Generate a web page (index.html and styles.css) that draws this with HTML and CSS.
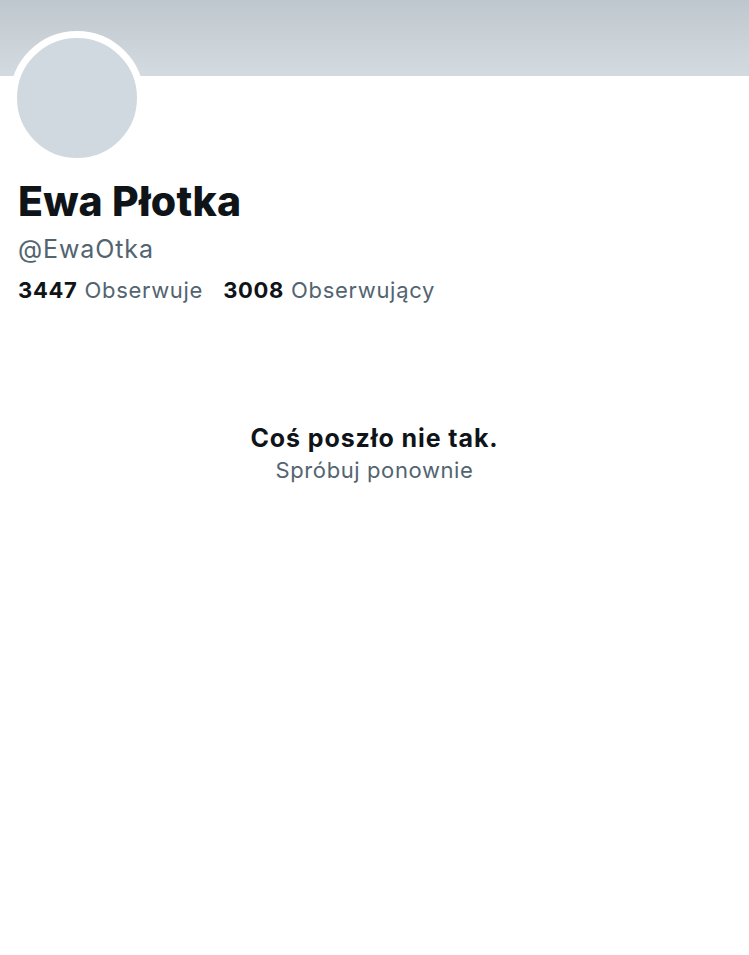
FILE: index.html
```html
<!DOCTYPE html>
<html lang="pl">
<head>
    <meta charset="UTF-8">
    <meta name="viewport" content="width=device-width, initial-scale=1.0">
    <title>Ewa Płotka (@EwaOtka)</title>
<link rel="stylesheet" href="styles.css">
</head>
<body>
<div class="profile">
    <div class="banner"></div>
    <div class="header">
        <div class="avatar"></div>
        <h1 class="name">Ewa Płotka</h1>
        <div class="handle">@EwaOtka</div>
        <div class="stats">
            <span class="stat"><b>3447</b> Obserwuje</span>
            <span class="stat"><b>3008</b> Obserwujący</span>
        </div>
    </div>
    <!-- error state -->
    <div class="error">
        <div class="error-title">Coś poszło nie tak.</div>
        <div class="error-retry">Spróbuj ponownie</div>
    </div>
</div>
</body>
</html>
```

FILE: styles.css
```css
:root{
  --clr-text: #0f1419;
  --clr-muted: #536471;
}

body {
  margin: 0;
  background-color: #fff;
  color: var(--clr-text);
  font-family: Inter, "Noto Sans", sans-serif;
}

.banner {
  height: 76px;
  background: linear-gradient(#bfc7ce, #d4dbe0);
}

.header {
  padding: 0 18px;
}

.avatar {
  width: 120px;
  height: 120px;
  margin: -45px 0 0 -8px;
  border: 7px solid #fff;
  border-radius: 50%;
  background-color: #d0d9df;
}

.name {
  margin: 12px 0 0;
  font-size: 41px;
  font-weight: 800;
  line-height: 48px;
  letter-spacing: 0.2px;
}

.handle {
  margin-top: 8px;
  font-size: 25px;
  line-height: 32px;
  letter-spacing: 0.9px;
  color: var(--clr-muted);
}

.stats {
  display: flex;
  gap: 20px;
  margin-top: 10px;
  font-size: 22px;
  line-height: 30px;
  letter-spacing: 0.7px;
  color: var(--clr-muted);
}

.stats b {
  color: var(--clr-text);
  font-weight: 700;
}

/*Error*/
.error {
  margin-top: 118px;
  text-align: center;
}

.error-title {
  font-size: 25px;
  font-weight: 700;
  line-height: 30px;
  letter-spacing: 0.9px;
}

.error-retry {
  margin-top: 3px;
  font-size: 22px;
  line-height: 28px;
  letter-spacing: 0.6px;
  color: var(--clr-muted);
}
```
